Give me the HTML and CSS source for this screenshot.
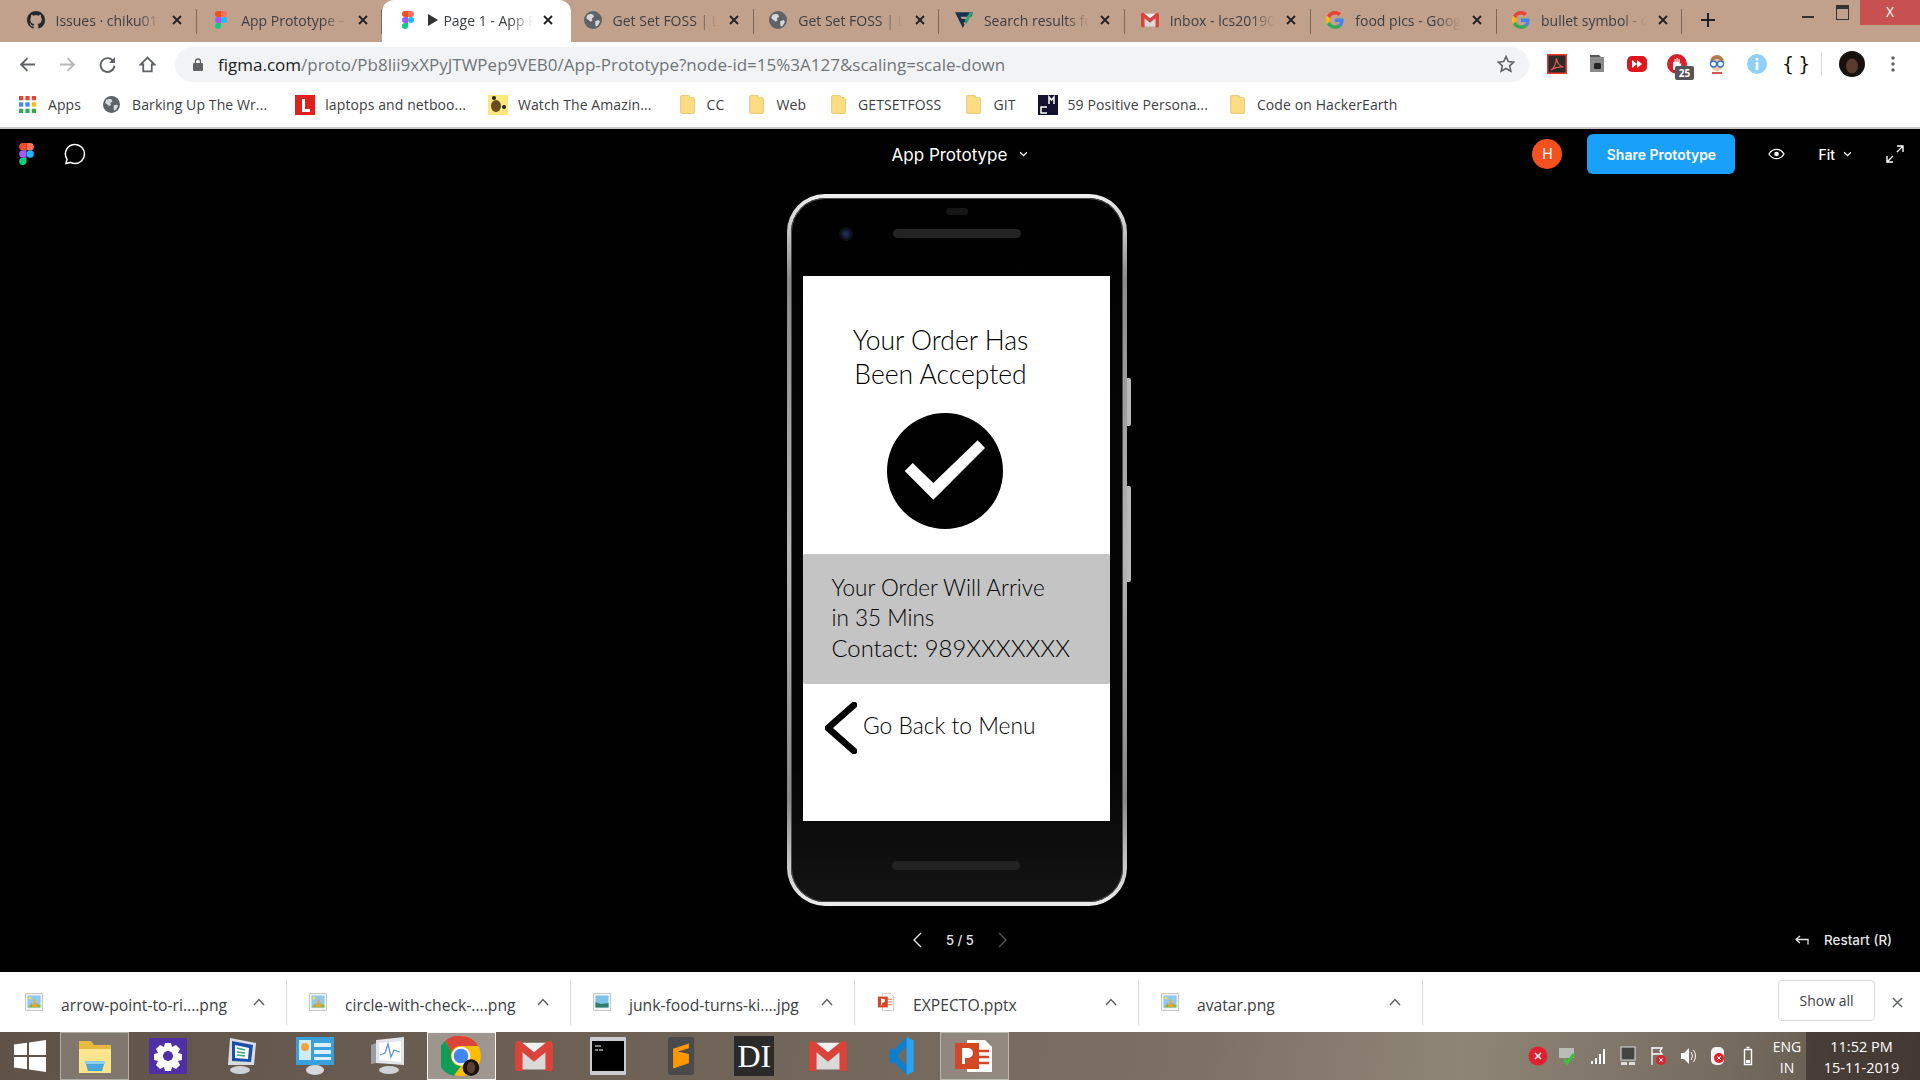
FILE: index.html
```html
<!DOCTYPE html>
<html>
<head>
    <meta charset="UTF-8">
    <meta name="viewport" content="width=device-width, initial-scale=1.0">
    <title>Page 1 - App Prototype</title>
    <link rel="stylesheet" href="styles.css">
</head>
<body>
    <svg class="defs" width="0" height="0">
        <symbol id="figma" viewBox="0 0 38 57">
            <path fill="#1abcfe" d="M19 28.5a9.5 9.5 0 1 1 19 0 9.5 9.5 0 0 1-19 0z"/>
            <path fill="#0acf83" d="M0 47.5A9.5 9.5 0 0 1 9.5 38H19v9.5a9.5 9.5 0 1 1-19 0z"/>
            <path fill="#ff7262" d="M19 0v19h9.5a9.5 9.5 0 1 0 0-19H19z"/>
            <path fill="#f24e1e" d="M0 9.5A9.5 9.5 0 0 0 9.5 19H19V0H9.5A9.5 9.5 0 0 0 0 9.5z"/>
            <path fill="#a259ff" d="M0 28.5A9.5 9.5 0 0 0 9.5 38H19V19H9.5A9.5 9.5 0 0 0 0 28.5z"/>
        </symbol>
        <symbol id="github" viewBox="0 0 16 16">
            <path fill="#24292e" d="M8 0C3.58 0 0 3.58 0 8c0 3.54 2.29 6.53 5.47 7.59.4.07.55-.17.55-.38 0-.19-.01-.82-.01-1.49-2.01.37-2.53-.49-2.69-.94-.09-.23-.48-.94-.82-1.13-.28-.15-.68-.52-.01-.53.63-.01 1.08.58 1.23.82.72 1.21 1.87.87 2.33.66.07-.52.28-.87.51-1.07-1.78-.2-3.64-.89-3.64-3.95 0-.87.31-1.59.82-2.15-.08-.2-.36-1.02.08-2.12 0 0 .67-.21 2.2.82.64-.18 1.32-.27 2-.27s1.36.09 2 .27c1.53-1.04 2.2-.82 2.2-.82.44 1.1.16 1.92.08 2.12.51.56.82 1.27.82 2.15 0 3.07-1.87 3.75-3.65 3.95.29.25.54.73.54 1.48 0 1.07-.01 1.93-.01 2.2 0 .21.15.46.55.38A8.013 8.013 0 0016 8c0-4.42-3.58-8-8-8z"/>
        </symbol>
        <symbol id="globe" viewBox="0 0 16 16">
            <circle cx="8" cy="8" r="8" fill="#5f6368"/>
            <path fill="#fff" d="M3 3.5l3-1 2 .5 1 2-2 1.5.5 2-1.5 1L4 8 2 6.5zM10 9l3-1 1.2 1.5-2 3.5-1.7.8-.5-2.3z" opacity=".75"/>
        </symbol>
        <symbol id="google" viewBox="0 0 48 48">
            <path fill="#EA4335" d="M24 9.5c3.54 0 6.71 1.22 9.21 3.6l6.85-6.85C35.9 2.38 30.47 0 24 0 14.62 0 6.51 5.38 2.56 13.22l7.98 6.19C12.43 13.72 17.74 9.5 24 9.5z"/>
            <path fill="#4285F4" d="M46.98 24.55c0-1.57-.15-3.09-.38-4.55H24v9.02h12.94c-.58 2.96-2.26 5.48-4.78 7.18l7.73 6c4.51-4.18 7.09-10.36 7.09-17.65z"/>
            <path fill="#FBBC05" d="M10.53 28.59c-.48-1.45-.76-2.99-.76-4.59s.27-3.14.76-4.59l-7.98-6.19C.92 16.46 0 20.12 0 24c0 3.88.92 7.54 2.56 10.78l7.97-6.19z"/>
            <path fill="#34A853" d="M24 48c6.48 0 11.93-2.13 15.89-5.81l-7.73-6c-2.15 1.45-4.92 2.3-8.16 2.3-6.26 0-11.57-4.22-13.47-9.91l-7.98 6.19C6.51 42.62 14.62 48 24 48z"/>
        </symbol>
        <symbol id="gmail" viewBox="0 0 20 16">
            <path fill="#f1f1f1" d="M1 1h18v14H1z"/>
            <path fill="#d9d9d9" d="M4 15V5l6 5 6-5v10z"/>
            <path fill="#d9433a" d="M0 2a2 2 0 0 1 3.2-1.5L10 6l6.8-5.5A2 2 0 0 1 20 2v12.5a1.5 1.5 0 0 1-1.5 1.5H16V6l-6 5-6-5v10H1.500A1.500 1.500 0 0 1 0 14.500z"/>
        </symbol>
        <symbol id="close" viewBox="0 0 10 10">
            <path d="M1 1l8 8M9 1l-8 8" stroke="#202124" stroke-width="1.8" fill="none"/>
        </symbol>
        <symbol id="folder" viewBox="0 0 14 18">
            <path fill="#fbdc83" stroke="#e6c262" stroke-width=".8" d="M.5 1.500a1 1 0 0 1 1-1h7l1 2h3a1 1 0 0 1 1 1v13a1 1 0 0 1-1 1h-11a1 1 0 0 1-1-1z"/>
        </symbol>
        <symbol id="picture" viewBox="0 0 18 18">
            <path fill="#f2f2f2" stroke="#bbb" stroke-width=".8" d="M.5.5h17v17H.5z"/>
            <path fill="#8fc9ee" d="M2.500 2.500h13v12h-13z"/>
            <path fill="#8bb93f" d="M2.500 14.500l4-4 3 2 3-2 3 2v2z"/>
            <path fill="#e8a33c" d="M7 14l2.500-9 3 9z"/>
            <circle cx="5" cy="5" r="1.500" fill="#f6dc5a"/>
        </symbol>
        <symbol id="caret" viewBox="0 0 12 8">
            <path d="M1 7l5-5.500L11 7" stroke="#5f6368" stroke-width="1.500" fill="none"/>
        </symbol>
    </svg>

    <header class="tabstrip">
        <div class="tab"><svg class="fav"><use href="#github"/></svg><span class="tab-title">Issues · chiku01175</span><svg class="tab-x"><use href="#close"/></svg></div>
        <div class="tab"><svg class="fav"><use href="#figma"/></svg><span class="tab-title">App Prototype – Figma</span><svg class="tab-x"><use href="#close"/></svg></div>
        <div class="tab active"><svg class="fav"><use href="#figma"/></svg><span class="tab-title"><span class="play"></span>Page 1 - App Prototype</span><svg class="tab-x"><use href="#close"/></svg></div>
        <div class="tab"><svg class="fav"><use href="#globe"/></svg><span class="tab-title">Get Set FOSS | Login</span><svg class="tab-x"><use href="#close"/></svg></div>
        <div class="tab"><svg class="fav"><use href="#globe"/></svg><span class="tab-title">Get Set FOSS | Login</span><svg class="tab-x"><use href="#close"/></svg></div>
        <div class="tab">
            <svg class="fav" viewBox="0 0 16 16"><path fill="#16324f" d="M0 1h16l-1.500 4H5l1 2h6l-1.500 3H7.500l1 2L7 15z"/><path fill="#2aa876" d="M9 8l4-7h3l-6 11z"/></svg>
            <span class="tab-title">Search results for</span><svg class="tab-x"><use href="#close"/></svg>
        </div>
        <div class="tab"><svg class="fav"><use href="#gmail"/></svg><span class="tab-title">Inbox - lcs2019001</span><svg class="tab-x"><use href="#close"/></svg></div>
        <div class="tab"><svg class="fav"><use href="#google"/></svg><span class="tab-title">food pics - Google</span><svg class="tab-x"><use href="#close"/></svg></div>
        <div class="tab"><svg class="fav"><use href="#google"/></svg><span class="tab-title">bullet symbol - Google</span><svg class="tab-x"><use href="#close"/></svg></div>
        <svg class="newtab" viewBox="0 0 14 14"><path d="M7 0v14M0 7h14" stroke="#202124" stroke-width="2"/></svg>
        <div class="winctl">
            <span class="win-min"></span>
            <span class="win-max"></span>
            <span class="win-close">X</span>
        </div>
    </header>

    <nav class="toolbar">
        <svg class="navbtn" viewBox="0 0 16 16"><path d="M15 8H2M8 2L2 8l6 6" stroke="#5f6368" stroke-width="1.800" fill="none"/></svg>
        <svg class="navbtn" viewBox="0 0 16 16"><path d="M1 8h13M8 2l6 6-6 6" stroke="#b5b7ba" stroke-width="1.800" fill="none"/></svg>
        <svg class="navbtn" viewBox="0 0 16 16"><path d="M13.500 5A6.500 6.500 0 1 0 14.500 9" stroke="#5f6368" stroke-width="1.800" fill="none"/><path d="M15 1v5.500H9.500z" fill="#5f6368"/></svg>
        <svg class="navbtn" viewBox="0 0 16 16"><path d="M8 1.500L1.500 8H4v6.500h8V8h2.500z" stroke="#5f6368" stroke-width="1.700" fill="none"/></svg>
        <div class="omnibox">
            <svg class="lock" viewBox="0 0 10 13"><path d="M2.500 6V3.500a2.500 2.500 0 0 1 5 0V6" stroke="#5f6368" stroke-width="1.300" fill="none"/><rect y="5" width="10" height="8" rx="1" fill="#5f6368"/></svg>
            <span class="url"><b>figma.com</b>/proto/Pb8lii9xXPyJTWPep9VEB0/App-Prototype?node-id=15%3A127&amp;scaling=scale-down</span>
            <svg class="star" viewBox="0 0 18 18"><path d="M9 1.500l2.300 5 5.400.6-4 3.700 1.100 5.400L9 13.500l-4.800 2.700 1.100-5.400-4-3.700 5.400-.6z" stroke="#5f6368" stroke-width="1.600" fill="none"/></svg>
        </div>
        <div class="extensions">
            <svg class="ext" viewBox="0 0 20 20"><rect width="20" height="20" fill="#e8392e"/><rect x="1.500" y="1.500" width="17" height="17" fill="#2b2b2b"/><path d="M4 16c3-2 5-6 5.500-12 .5 5 3 8 7 9-4-.5-8 0-12.500 3z" stroke="#e8584f" stroke-width="1.200" fill="none"/></svg>
            <svg class="ext" viewBox="0 0 20 20"><path fill="#8a8a8a" d="M3 3h14v15H3z"/><path fill="#555" d="M3 1h9l2 2H3z"/><rect x="7" y="9" width="7" height="6" rx="1.500" fill="#222"/></svg>
            <svg class="ext" viewBox="0 0 20 20"><rect y="2" width="20" height="16" rx="5" fill="#e0161e"/><path fill="#fff" d="M5 6l5 4-5 4zM10 6l5 4-5 4z"/></svg>
            <div class="ext-badge">
                <svg class="ext" viewBox="0 0 20 20"><circle cx="10" cy="10" r="10" fill="#d8202a"/><path fill="#fff" d="M6 16V8h1.500V5h1.200v3h.8V4h1.200v4h.8V5h1.200v5l1.500-1v4l-2 3z"/></svg>
                <span class="badge">25</span>
            </div>
            <svg class="ext" viewBox="0 0 20 20"><circle cx="10" cy="8" r="7" fill="#b7774e"/><circle cx="10" cy="11" r="6" fill="#f1c7a7"/><circle cx="6.500" cy="10" r="3" fill="#fff" stroke="#2f78d8" stroke-width="1.300"/><circle cx="13.500" cy="10" r="3" fill="#fff" stroke="#2f78d8" stroke-width="1.300"/><path d="M5 18h10v2H5z" fill="#d9534f"/></svg>
            <svg class="ext" viewBox="0 0 20 20"><circle cx="10" cy="10" r="10" fill="#8fd0fb"/><path d="M8.700 4h2.600v2.500H8.700zM8.700 8h2.600v8H8.700z" fill="#fff"/></svg>
            <span class="braces">{ }</span>
            <span class="ext-sep"></span>
            <svg class="profile" viewBox="0 0 26 26"><circle cx="13" cy="13" r="13" fill="#17110e"/><ellipse cx="13" cy="15" rx="6" ry="7.500" fill="#5a3a2a"/></svg>
            <svg class="dots" viewBox="0 0 4 18"><circle cx="2" cy="3" r="1.700"/><circle cx="2" cy="9" r="1.700"/><circle cx="2" cy="15" r="1.700"/></svg>
        </div>
    </nav>

    <nav class="bookmarks">
        <div class="mark tight">
            <svg class="mark-ico" viewBox="0 0 16 16">
                <g fill="#ea4335"><rect width="4" height="4"/><rect x="6" width="4" height="4"/><rect x="12" width="4" height="4"/></g>
                <g fill="#4285f4"><rect y="6" width="4" height="4"/><rect x="6" y="6" width="4" height="4"/></g>
                <g fill="#fbbc05"><rect x="12" y="6" width="4" height="4"/></g>
                <g fill="#34a853"><rect y="12" width="4" height="4"/><rect x="6" y="12" width="4" height="4"/><rect x="12" y="12" width="4" height="4"/></g>
            </svg>Apps
        </div>
        <div class="mark wide"><svg class="mark-ico"><use href="#globe"/></svg>Barking Up The Wr...</div>
        <div class="mark tight"><svg class="mark-ico big" viewBox="0 0 20 20"><rect width="20" height="20" fill="#e0201c"/><path d="M7 4h3v10h5v3H7z" fill="#fff"/></svg>laptops and netboo...</div>
        <div class="mark wide"><svg class="mark-ico big" viewBox="0 0 20 20"><rect width="20" height="20" fill="#fbe77e"/><ellipse cx="8" cy="11" rx="5" ry="6" fill="#6b4a1f"/><circle cx="16" cy="12" r="2" fill="#222"/><circle cx="6" cy="3" r="2" fill="#222"/></svg>Watch The Amazin...</div>
        <div class="mark"><svg class="mark-ico folder"><use href="#folder"/></svg>CC</div>
        <div class="mark"><svg class="mark-ico folder"><use href="#folder"/></svg>Web</div>
        <div class="mark"><svg class="mark-ico folder"><use href="#folder"/></svg>GETSETFOSS</div>
        <div class="mark tight"><svg class="mark-ico folder"><use href="#folder"/></svg>GIT</div>
        <div class="mark tight"><svg class="mark-ico big" viewBox="0 0 20 20"><rect width="20" height="20" fill="#13122e"/><path d="M11 9V2l2.500 3L16 2v7M9 12H3v6h6" stroke="#fff" stroke-width="1.500" fill="none"/></svg>59 Positive Persona...</div>
        <div class="mark"><svg class="mark-ico folder"><use href="#folder"/></svg>Code on HackerEarth</div>
    </nav>

    <main class="viewer">
        <div class="viewer-bar">
            <div class="bar-left">
                <svg class="fig-logo"><use href="#figma"/></svg>
                <svg class="comment" viewBox="0 0 22 22"><path d="M11 1.500a9.500 9.500 0 0 1 0 19c-1.700 0-3.200-.4-4.500-1.100L2 20.500l1-4.300A9.500 9.500 0 0 1 11 1.500z" stroke="#fff" stroke-width="1.500" fill="none"/></svg>
            </div>
            <div class="bar-title">App Prototype<svg class="chev" viewBox="0 0 8 6"><path d="M1 1l3 3 3-3" stroke="#fff" stroke-width="1.200" fill="none"/></svg></div>
            <div class="bar-right">
                <span class="avatar">H</span>
                <button class="share">Share Prototype</button>
                <svg class="eye" viewBox="0 0 18 12"><path d="M1 6c2-3.200 4.800-5 8-5s6 1.800 8 5c-2 3.200-4.800 5-8 5S3 9.200 1 6z" stroke="#fff" stroke-width="1.300" fill="none"/><circle cx="9" cy="6" r="2.500" fill="#fff"/></svg>
                <span class="fit">Fit<svg class="chev" viewBox="0 0 8 6"><path d="M1 1l3 3 3-3" stroke="#fff" stroke-width="1.200" fill="none"/></svg></span>
                <svg class="expand" viewBox="0 0 18 18"><path d="M11 1h6v6M17 1l-6 6M7 17H1v-6M1 17l6-6" stroke="#fff" stroke-width="1.400" fill="none"/></svg>
            </div>
        </div>

        <div class="stage">
            <div class="phone">
                <span class="side-btn power"></span>
                <span class="side-btn volume"></span>
                <div class="phone-top">
                    <span class="sensor"></span>
                    <span class="camera"></span>
                    <span class="speaker"></span>
                </div>
                <div class="screen">
                    <h1 class="order-title">Your Order Has<br>Been Accepted</h1>
                    <svg class="check" viewBox="0 0 116 116">
                        <circle cx="58" cy="58" r="58" fill="#000"/>
                        <path fill="#fff" d="M17.700 58l8-8 20.600 20L90.700 27.300 98 35 46.300 86.700z"/>
                    </svg>
                    <div class="eta">Your Order Will Arrive<br>in 35 Mins<br><span class="contact">Contact: 989XXXXXXX</span></div>
                    <div class="back">
                        <svg class="back-ico" viewBox="0 0 32 52"><path d="M29 3L3 26l26 23" stroke="#000" stroke-width="6.500" stroke-linecap="round" stroke-linejoin="round" fill="none"/></svg>
                        <span>Go Back to Menu</span>
                    </div>
                </div>
                <div class="phone-bottom"><span class="speaker"></span></div>
            </div>
        </div>

        <div class="pager-row">
            <div class="pager">
                <svg class="page-arrow" viewBox="0 0 9 16"><path d="M8 1L1 8l7 7" stroke="#e6e6e6" stroke-width="1.400" fill="none"/></svg>
                <span>5 / 5</span>
                <svg class="page-arrow" viewBox="0 0 9 16"><path d="M1 1l7 7-7 7" stroke="#555" stroke-width="1.400" fill="none"/></svg>
            </div>
            <div class="restart">
                <svg class="restart-ico" viewBox="0 0 14 10"><path d="M5 1L1 4.500 5 8M1 4.500h12v5" stroke="#e6e6e6" stroke-width="1.300" fill="none"/></svg>
                Restart (R)
            </div>
        </div>
    </main>

    <section class="downloads">
        <div class="dl"><svg class="dl-ico"><use href="#picture"/></svg><span class="dl-name">arrow-point-to-ri....png</span><svg class="dl-caret"><use href="#caret"/></svg></div>
        <div class="dl"><svg class="dl-ico"><use href="#picture"/></svg><span class="dl-name">circle-with-check-....png</span><svg class="dl-caret"><use href="#caret"/></svg></div>
        <div class="dl"><svg class="dl-ico" viewBox="0 0 18 18"><path fill="#f2f2f2" stroke="#bbb" stroke-width=".8" d="M.5.5h17v17H.5z"/><path fill="#7fc4e8" d="M2.500 2.500h13v12h-13z"/><path fill="#2f7d6a" d="M2.500 9l5 2 8-1v4.500h-13z"/></svg><span class="dl-name">junk-food-turns-ki....jpg</span><svg class="dl-caret"><use href="#caret"/></svg></div>
        <div class="dl"><svg class="dl-ico" viewBox="0 0 18 20"><path fill="#fff" stroke="#bbb" stroke-width=".8" d="M5 .5h9l3.500 3.500v15.500H5z"/><path d="M11 7h5M11 10h5M11 13h5" stroke="#d9694a"/><rect y="4" width="11" height="12" fill="#d24726"/><path d="M3.500 6.500h2.500a2 2 0 0 1 0 4H4.800v3H3.500z" fill="#fff"/></svg><span class="dl-name">EXPECTO.pptx</span><svg class="dl-caret"><use href="#caret"/></svg></div>
        <div class="dl"><svg class="dl-ico"><use href="#picture"/></svg><span class="dl-name">avatar.png</span><svg class="dl-caret"><use href="#caret"/></svg></div>
        <button class="show-all">Show all</button>
        <svg class="dl-close" viewBox="0 0 12 12"><path d="M1 1l10 10M11 1L1 11" stroke="#5f6368" stroke-width="1.600"/></svg>
    </section>

    <footer class="taskbar">
        <svg class="win-logo" viewBox="0 0 32 32"><path fill="#fff" d="M0 4.500L13 2.700V15H0zM15 2.400L32 0v15H15zM0 17h13v12.300L0 27.500zM15 17h17v15l-17-2.400z"/></svg>
        <div class="task on">
            <svg class="task-ico" viewBox="0 0 36 38"><path fill="#e8b93f" d="M2 4h12l3 4h17v28H2z"/><path fill="#fbe58f" d="M2 12h32v24H2z"/><path fill="#4aa6dc" d="M8 24h20l-3 10H11z"/><path fill="#8fd0f2" d="M8 24h20v3H8z"/></svg>
        </div>
        <div class="task"><svg class="task-ico" viewBox="0 0 38 36"><rect width="38" height="36" fill="#4f2fa6"/><path fill="#fff" d="M16 5h6l1 4 4-2 4 4-2 4 4 1v6l-4 1 2 4-4 4-4-2-1 4h-6l-1-4-4 2-4-4 2-4-4-1v-6l4-1-2-4 4-4 4 2z"/><circle cx="19" cy="18" r="5" fill="#4f2fa6"/></svg></div>
        <div class="task"><svg class="task-ico" viewBox="0 0 34 38"><path fill="#d9dde2" d="M6 1l26 5-2 22H4z"/><path fill="#1a4fa8" d="M8 4l21 4-2 17-19-1z"/><path fill="#fff" d="M11 8l14 3-1 11-13-1z"/><path stroke="#3a7" stroke-width="1.500" d="M13 11l8 2M13 15l8 1M13 18l8 1"/><ellipse cx="16" cy="33" rx="10" ry="4" fill="#cfd2d6"/></svg></div>
        <div class="task"><svg class="task-ico" viewBox="0 0 38 38"><rect width="38" height="28" fill="#3aa0dc"/><rect x="3" y="3" width="12" height="20" fill="#cfeaf8"/><circle cx="9" cy="10" r="4" fill="#f0a43c"/><path d="M18 6h17v4H18zM18 13h17v4H18zM18 20h17v3H18z" fill="#d8f0fb"/><ellipse cx="19" cy="33" rx="9" ry="5" fill="#d5d8dc"/></svg></div>
        <div class="task"><svg class="task-ico" viewBox="0 0 36 38"><path fill="#e1e4e8" d="M6 3l28-3v28L6 26z"/><path fill="#fff" d="M9 6l22-2v21L9 23z"/><path d="M10 18l5-2 3-9 3 13 3-7 6 2" stroke="#5f98d6" stroke-width="1.300" fill="none"/><path fill="#9a9ea3" d="M1 8l5-2v20l-5 1z"/><ellipse cx="19" cy="33" rx="10" ry="4" fill="#cfd2d6"/></svg></div>
        <div class="task on chrome">
            <svg class="task-ico big" viewBox="0 0 48 48">
                <circle cx="24" cy="24" r="24" fill="#fbbc05"/>
                <path fill="#db4437" d="M24 0a24 24 0 0 1 20.800 12H24a12 12 0 0 0-11 7L5 6A24 24 0 0 1 24 0z"/>
                <path fill="#0f9d58" d="M5 6l8 13a12 12 0 0 0 11 17l-9 12A24 24 0 0 1 5 6z"/>
                <circle cx="24" cy="24" r="10" fill="#4285f4" stroke="#fff" stroke-width="2.500"/>
                <circle cx="36" cy="38" r="10" fill="#1a120e"/>
                <ellipse cx="36" cy="38" rx="5" ry="7" fill="#5e4030"/>
            </svg>
        </div>
        <div class="task"><svg class="task-ico" viewBox="0 0 20 16"><use href="#gmail"/></svg></div>
        <div class="task"><svg class="task-ico" viewBox="0 0 36 38"><rect width="36" height="38" rx="1" fill="#c9ccd0"/><rect x="2" y="4" width="32" height="30" fill="#000"/><path d="M5 9h6M5 13h3M9 13h4" stroke="#fff" stroke-width="1.200"/></svg></div>
        <div class="task"><svg class="task-ico" viewBox="0 0 40 58"><rect width="40" height="58" rx="5" fill="#4a4a4a"/><path fill="#ff9800" d="M32 10L8 18v10l24 8v-10L15 22l17-5zM8 48l24-8V30L8 22z"/></svg></div>
        <div class="task"><div class="di-tile">DI</div></div>
        <div class="task"><svg class="task-ico" viewBox="0 0 20 16"><use href="#gmail"/></svg></div>
        <div class="task"><svg class="task-ico" viewBox="0 0 36 54"><path fill="#0f7fcc" d="M26 0l10 5v44l-10 5L7 35l-5 4V15l5 4zM26 13L13 27l13 14z"/><path fill="#2aa4f0" d="M26 0l10 5v44l-10 5z"/></svg></div>
        <div class="task on"><svg class="task-ico" viewBox="0 0 38 38"><path fill="#fff" d="M12 3h18l7 7v25H12z"/><path d="M22 14h12M22 20h12M22 26h12" stroke="#d24726" stroke-width="2.500"/><rect y="6" width="24" height="26" fill="#d24726"/><path d="M7 11h6a4.500 4.500 0 0 1 0 10h-3v6H7z" fill="#fff"/></svg></div>
        <div class="tray">
            <svg class="tray-ico" viewBox="0 0 20 20"><circle cx="10" cy="10" r="9.500" fill="#e0202e"/><path d="M7 7l6 6M13 7l-6 6" stroke="#fff" stroke-width="1.500"/></svg>
            <svg class="tray-ico" viewBox="0 0 20 20"><rect x="1" y="2" width="15" height="10" fill="#b9bdb8"/><path d="M6 13l3 4 7-9" stroke="#3fbf3f" stroke-width="3" fill="none"/></svg>
            <svg class="tray-ico" viewBox="0 0 20 20"><path fill="#fff" d="M3 15h2v3H3zM7 12h2v6H7zM11 8h2v10h-2zM15 3h2v15h-2z"/></svg>
            <svg class="tray-ico" viewBox="0 0 20 20"><rect x="3" y="1" width="14" height="13" fill="#444" stroke="#ddd"/><rect x="3" y="16" width="6" height="3" fill="#ddd"/><rect x="11" y="16" width="6" height="3" fill="#ddd"/></svg>
            <svg class="tray-ico" viewBox="0 0 20 20"><path d="M4 1v18M4 2h10l-2 3 2 3H4" stroke="#fff" stroke-width="1.300" fill="none"/><circle cx="13" cy="14" r="5" fill="#e0202e"/><path d="M11 12l4 4M15 12l-4 4" stroke="#fff"/></svg>
            <svg class="tray-ico" viewBox="0 0 20 20"><path fill="#fff" d="M3 7h3l5-5v16l-5-5H3z"/><path d="M13 6q3 4 0 8M15.500 4q4 6 0 12" stroke="#fff" fill="none"/></svg>
            <svg class="tray-ico" viewBox="0 0 20 20"><rect x="3" y="1" width="13" height="18" rx="5" fill="#f2f2f2"/><circle cx="11" cy="12" r="5" fill="#ee1c25"/><path d="M9 10l4 4M13 10l-4 4" stroke="#fff"/></svg>
            <svg class="tray-ico" viewBox="0 0 20 20"><path d="M6.500 3.500h7v15h-7zM8.500 1.500h3" stroke="#fff" stroke-width="1.400" fill="none"/><rect x="8" y="14" width="4" height="3" fill="#fff"/></svg>
        </div>
        <div class="lang">ENG<br>IN</div>
        <div class="clock">11:52 PM<br>15-11-2019</div>
    </footer>
</body>
</html>
```

FILE: styles.css
```css
* {
    box-sizing: border-box;
}

html, body {
    margin: 0;
    padding: 0;
}

body {
    width: 1920px;
    height: 1080px;
    overflow: hidden;
    display: flex;
    flex-direction: column;
    background-color: #000;
    font-family: "Open Sans", "Liberation Sans", sans-serif;
    color: #3c4043;
}

.defs {
    position: absolute;
}

/* tabs */
.tabstrip {
    height: 42px;
    flex: none;
    display: flex;
    align-items: center;
    padding-left: 11px;
    background-color: #c1a08c;
}

.tab {
    width: 185.7px;
    height: 42px;
    flex: none;
    display: flex;
    align-items: center;
    padding: 0 0 2px 15.500px;
    position: relative;
}

.tab::after {
    content: "";
    position: absolute;
    right: 0;
    top: 9px;
    height: 25px;
    border-right: 1px solid #7d675a;
}

.tab.active {
    width: 188.7px;
    margin-right: -3px;
    padding-left: 17px;
    background-color: #fff;
    border-radius: 12px 12px 0 0;
    z-index: 1;
}

.tab.active::after {
    display: none;
}

.fav {
    width: 18px;
    height: 18px;
    flex: none;
}

.tab-title {
    width: 105px;
    margin-left: 11px;
    font-size: 14px;
    color: #3c3f42;
    white-space: nowrap;
    overflow: hidden;
    -webkit-mask-image: linear-gradient(to right, #000 78%, transparent);
    mask-image: linear-gradient(to right, #000 78%, transparent);
}

.play {
    display: inline-block;
    margin-right: 5px;
    border-left: 10px solid #333;
    border-top: 6px solid transparent;
    border-bottom: 6px solid transparent;
}

.tab-x {
    width: 10px;
    height: 10px;
    margin-left: 11.500px;
    flex: none;
}

.tab.active .tab-x {
    margin-left: 10px;
}

.newtab {
    width: 14px;
    height: 14px;
    margin-left: 19px;
    margin-bottom: 2px;
    flex: none;
}

.winctl {
    margin-left: auto;
    height: 42px;
    display: flex;
    align-items: flex-start;
}

.win-min {
    width: 12px;
    height: 2px;
    margin-top: 16px;
    margin-right: 22px;
    background-color: #333;
}

.win-max {
    width: 13px;
    height: 15px;
    margin-top: 5px;
    margin-right: 11px;
    border: 1.500px solid #333;
    border-top-width: 4px;
}

.win-close {
    width: 60px;
    height: 25px;
    background-color: #c75050;
    color: #fff;
    font-size: 14px;
    text-align: center;
    line-height: 23px;
}

/* address bar */
.toolbar {
    height: 44px;
    flex: none;
    display: flex;
    align-items: center;
    padding-left: 19px;
    background-color: #fff;
}

.navbtn {
    width: 17px;
    height: 17px;
    margin-right: 23px;
    flex: none;
}

.omnibox {
    width: 1354px;
    height: 35px;
    margin-left: -4px;
    flex: none;
    display: flex;
    align-items: center;
    padding: 0 14px 0 18px;
    background-color: #f1f3f4;
    border-radius: 18px;
}

.lock {
    width: 10px;
    height: 13px;
    flex: none;
}

.url {
    margin-left: 15px;
    font-size: 17px;
    color: #70757a;
    white-space: nowrap;
    flex: 1;
}

.url b {
    font-weight: 400;
    color: #202124;
}

.star {
    width: 18px;
    height: 18px;
    flex: none;
}

.extensions {
    display: flex;
    align-items: center;
    margin-left: 18px;
    gap: 20px;
}

.ext {
    width: 20px;
    height: 20px;
    display: block;
    flex: none;
}

.ext-badge {
    position: relative;
}

.badge {
    position: absolute;
    left: 8px;
    top: 12px;
    width: 19px;
    height: 14px;
    background-color: #555;
    color: #fff;
    font-size: 10px;
    font-weight: 700;
    line-height: 14px;
    text-align: center;
    border-radius: 2px;
}

.braces {
    width: 22px;
    margin-left: -5px;
    color: #111;
    font-family: "DejaVu Sans", sans-serif;
    font-size: 19px;
    white-space: nowrap;
    text-align: center;
    letter-spacing: -1px;
}

.ext-sep {
    width: 1px;
    height: 24px;
    margin: 0 -3px;
    background-color: #dadce0;
}

.profile {
    width: 26px;
    height: 26px;
    flex: none;
}

.dots {
    width: 4px;
    height: 18px;
    margin-left: 6px;
    fill: #5f6368;
    flex: none;
}

/* bookmarks */
.bookmarks {
    height: 43px;
    flex: none;
    display: flex;
    align-items: center;
    padding: 0 0 4px 19px;
    background-color: #fff;
    border-bottom: 2px solid #c8c8c8;
    font-size: 14px;
    letter-spacing: 0.1px;
    color: #3c4043;
}

.mark {
    display: flex;
    align-items: center;
    margin-right: 25px;
    white-space: nowrap;
}

.mark.tight {
    margin-right: 22px;
}

.mark.wide {
    margin-right: 28px;
}

.mark-ico {
    width: 17px;
    height: 17px;
    margin-right: 12px;
    flex: none;
}

.mark-ico.big {
    width: 20px;
    height: 20px;
    margin-right: 10px;
}

.mark-ico.folder {
    width: 15px;
    height: 19px;
    margin-right: 12px;
}

/* prototype viewer */
.viewer {
    flex: 1;
    display: flex;
    flex-direction: column;
    background-color: #000;
    color: #fff;
    font-family: Inter, "Liberation Sans", sans-serif;
}

.viewer-bar {
    height: 50px;
    flex: none;
    display: grid;
    grid-template-columns: 1fr auto 1fr;
    align-items: center;
}

.bar-left {
    display: flex;
    align-items: center;
    padding-left: 19px;
}

.fig-logo {
    width: 15px;
    height: 22px;
}

.comment {
    width: 22px;
    height: 22px;
    margin-left: 30px;
}

.bar-title {
    display: flex;
    align-items: center;
    padding-top: 1px;
    font-size: 17px;
}

.chev {
    width: 9px;
    height: 7px;
    margin-left: 12px;
}

.bar-right {
    display: flex;
    align-items: center;
    justify-content: flex-end;
    padding-right: 16px;
}

.avatar {
    width: 30px;
    height: 30px;
    border-radius: 50%;
    background-color: #f4511e;
    font-size: 14px;
    line-height: 30px;
    text-align: center;
}

.share {
    width: 148px;
    height: 40px;
    margin-left: 25px;
    background-color: #18a0fb;
    color: #fff;
    border: none;
    border-radius: 6px;
    font-family: Inter, "Liberation Sans", sans-serif;
    font-size: 14px;
    font-weight: 600;
}

.eye {
    width: 17px;
    height: 12px;
    margin-left: 33px;
}

.fit {
    display: flex;
    align-items: center;
    margin-left: 33px;
    font-size: 14px;
    font-weight: 500;
}

.fit .chev {
    margin-left: 8px;
}

.expand {
    width: 18px;
    height: 18px;
    margin-left: 34px;
}

.stage {
    flex: none;
    display: flex;
    justify-content: center;
    padding: 15px 7px 0 0;
}

.phone {
    width: 340px;
    height: 712px;
    position: relative;
    border: 4px solid transparent;
    border-radius: 38px;
    background:
        linear-gradient(#000, #050505 30%, #040404 80%, #141414) padding-box,
        linear-gradient(#f0f0f0, #8a8a8a 12%, #b5b5b5 50%, #888 85%, #eee) border-box;
    box-shadow: inset 0 0 0 1px #4a4a4a;
    display: flex;
    flex-direction: column;
    align-items: flex-start;
    padding-left: 12.500px;
}

.side-btn {
    position: absolute;
    left: 336px;
    width: 4px;
    background-color: #b9b9b9;
    border-radius: 0 2px 2px 0;
}

.power {
    top: 180px;
    height: 48px;
}

.volume {
    top: 288px;
    height: 96px;
}

.phone-top {
    height: 78px;
    flex: none;
}

.sensor {
    position: absolute;
    left: 155px;
    top: 10px;
    width: 22px;
    height: 7px;
    border-radius: 4px;
    background-color: #161616;
}

.camera {
    position: absolute;
    left: 48px;
    top: 29px;
    width: 14px;
    height: 14px;
    border-radius: 50%;
    background: radial-gradient(#1f2b55 15%, #0e0f16 55%);
}

.speaker {
    display: block;
    width: 128px;
    height: 9px;
    border-radius: 5px;
    background-color: #232323;
}

.phone-top .speaker {
    position: absolute;
    left: 102px;
    top: 31px;
}

.screen {
    width: 306.500px;
    height: 545px;
    flex: none;
    background-color: #fff;
    color: #000;
    font-family: Lato, "Open Sans", sans-serif;
    font-weight: 300;
}

.order-title {
    width: 275px;
    margin: 0;
    padding-top: 47px;
    font-size: 26.500px;
    font-weight: 300;
    line-height: 34px;
    text-align: center;
}

.check {
    display: block;
    width: 116px;
    height: 116px;
    margin: 22px 0 25px 83.500px;
}

.eta {
    height: 130px;
    padding: 19px 0 0 28.500px;
    background-color: #c4c4c4;
    border-radius: 2px;
    font-size: 22.500px;
    line-height: 30px;
}

.contact {
    font-size: 23.800px;
}

.back {
    display: flex;
    align-items: flex-start;
    padding: 18px 0 0 22px;
    font-size: 22.800px;
    line-height: 30px;
}

.back-ico {
    width: 32px;
    height: 52px;
    flex: none;
}

.back span {
    margin: 8px 0 0 6px;
}

.phone-bottom {
    flex: 1;
    width: 306.500px;
    display: flex;
    justify-content: center;
    padding-top: 40px;
}

.pager-row {
    height: 34px;
    margin-top: 17px;
    display: grid;
    grid-template-columns: 1fr auto 1fr;
    align-items: center;
    font-size: 13px;
    font-weight: 500;
}

.pager {
    grid-column: 2;
    display: flex;
    align-items: center;
    gap: 24px;
    color: #e6e6e6;
}

.page-arrow {
    width: 9px;
    height: 16px;
}

.restart {
    display: flex;
    align-items: center;
    justify-content: flex-end;
    gap: 15px;
    padding-right: 28px;
    font-size: 13.400px;
    color: #e6e6e6;
}

.restart-ico {
    width: 14px;
    height: 10px;
}

/* downloads */
.downloads {
    height: 60px;
    flex: none;
    display: flex;
    align-items: center;
    padding-left: 3px;
    background-color: #fff;
    font-size: 15.700px;
    color: #3c4043;
}

.dl {
    width: 284px;
    height: 45px;
    flex: none;
    display: flex;
    align-items: center;
    padding-left: 22px;
    border-right: 1px solid #d9d9d9;
}

.dl-ico {
    width: 18px;
    height: 18px;
    flex: none;
}

.dl-name {
    width: 184px;
    margin-left: 18px;
    margin-top: 5px;
    white-space: nowrap;
}

.dl-caret {
    width: 12px;
    height: 8px;
    margin-left: 8px;
    flex: none;
}

.show-all {
    width: 97px;
    height: 41px;
    margin-left: 355px;
    margin-top: -3px;
    background-color: #fff;
    border: 1px solid #dadce0;
    border-radius: 4px;
    font-family: "Open Sans", sans-serif;
    font-size: 14px;
    color: #3c4043;
}

.dl-close {
    width: 11px;
    height: 11px;
    margin-left: 17px;
}

/* windows taskbar */
.taskbar {
    height: 48px;
    flex: none;
    display: flex;
    align-items: center;
    background:
        linear-gradient(100deg, #5f5349 0%, #6d6055 30%, #7c7064 62%, #8f8577 76%, #756a5e 90%, #5f5349 100%);
    color: #fff;
}

.win-logo {
    width: 32px;
    height: 32px;
    margin: 0 12px 0 14px;
    flex: none;
}

.task {
    width: 73.300px;
    height: 48px;
    flex: none;
    display: flex;
    align-items: center;
    justify-content: center;
}

.task.on {
    width: 69px;
    margin: 0 2.150px;
    background-color: rgba(255, 255, 255, 0.2);
    border: 1px solid rgba(255, 255, 255, 0.4);
}

.task.chrome {
    background-color: rgba(255, 255, 255, 0.35);
    border: 1.500px solid rgba(255, 255, 255, 0.9);
}

.task-ico {
    width: 38px;
    height: 38px;
}

.task-ico.big {
    width: 40px;
    height: 40px;
}

.di-tile {
    width: 40px;
    height: 40px;
    background-color: #2a2a2a;
    color: #fff;
    font-family: "Liberation Serif", serif;
    font-size: 32px;
    line-height: 40px;
    text-align: center;
}

.tray {
    display: flex;
    align-items: center;
    gap: 10px;
    margin-left: auto;
}

.tray-ico {
    width: 20px;
    height: 20px;
}

.lang {
    width: 38px;
    margin-left: 10px;
    padding-top: 2px;
    font-size: 14px;
    line-height: 21px;
    text-align: center;
}

.clock {
    width: 114px;
    height: 48px;
    padding: 4px 3px 0 0;
    background-color: rgba(50, 38, 36, 0.6);
    font-size: 14.500px;
    line-height: 21px;
    text-align: center;
}
```
